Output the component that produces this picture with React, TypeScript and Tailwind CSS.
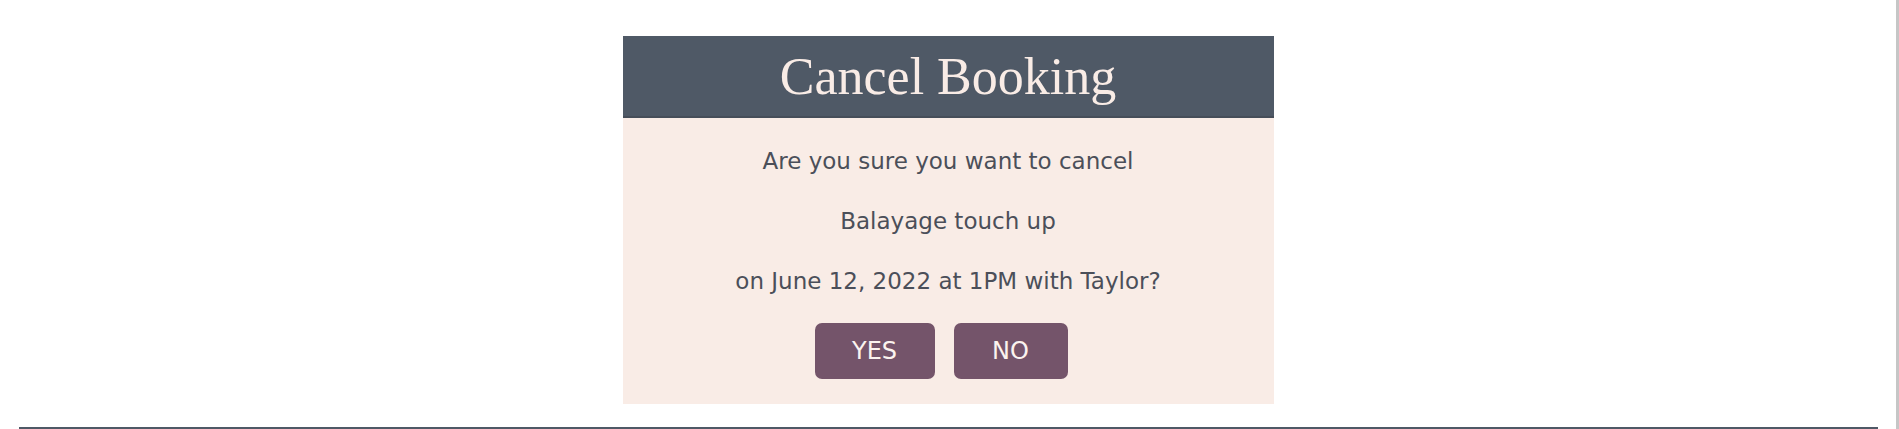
import React from "react";

export default function App() {
  return (
    <div className="flex w-full h-[429px] bg-white overflow-hidden">
      <div className="flex-1 flex flex-col items-center">
        <div className="mt-[36px] w-[651px] flex flex-col">
          <div
            className="h-[82px] bg-[#4f5966] border-b-2 border-[#464e59] flex items-center justify-center text-[#f9ece6] text-[52px]"
            style={{ fontFamily: '"Liberation Serif", serif' }}
          >
            <span className="leading-none mt-[2px]">Cancel Booking</span>
          </div>
          <div
            className="bg-[#f9ece6] flex flex-col items-center pt-[28px] pb-[25px] text-[#4b4f59] text-[23px]"
            style={{ fontFamily: '"DejaVu Sans", sans-serif' }}
          >
            <p className="leading-[30px]">Are you sure you want to cancel</p>
            <p className="leading-[30px] mt-[30px]">Balayage touch up</p>
            <p className="leading-[30px] mt-[30px]">on June 12, 2022 at 1PM with Taylor?</p>
            <div className="flex gap-[19px] mt-[27px] mr-[14px]">
              <button className="h-[56px] w-[120px] rounded-[7px] bg-[#74546a] text-[#fbf3ef] text-[24px] leading-none">
                YES
              </button>
              <button className="h-[56px] w-[114px] rounded-[7px] bg-[#74546a] text-[#fbf3ef] text-[24px] leading-none">
                NO
              </button>
            </div>
          </div>
        </div>
        <div className="mt-auto w-[1859px] h-[2px] bg-[#4f5966]" />
      </div>
      <div className="w-[3px] h-full bg-[#c6c6c6]" />
    </div>
  );
}
